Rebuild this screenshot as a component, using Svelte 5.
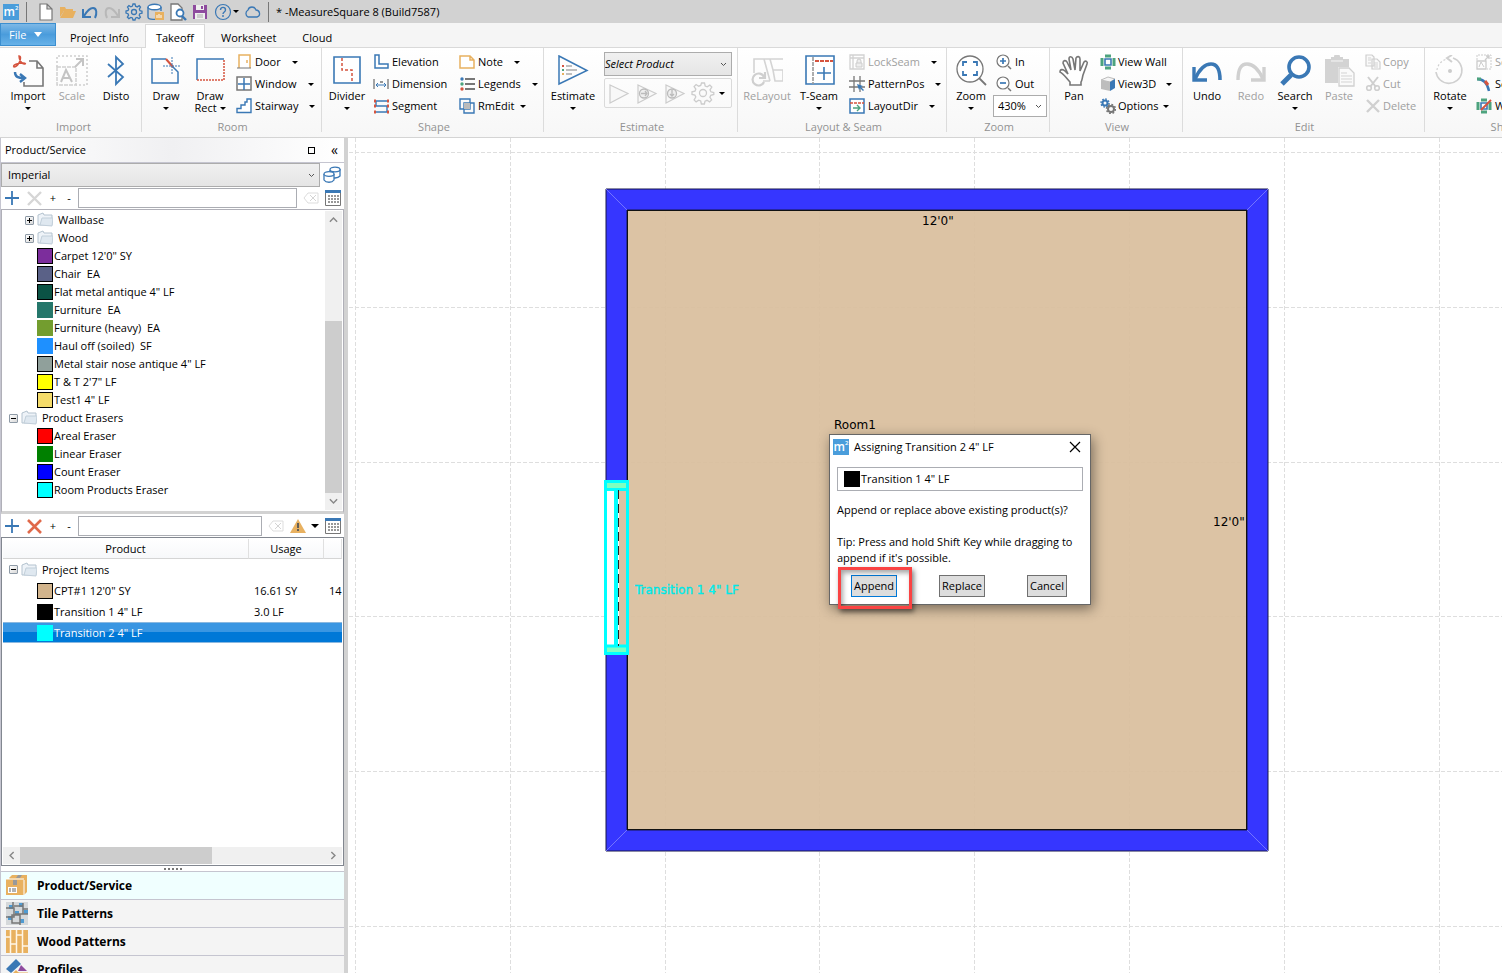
<script>
  const BLUE = '#3a78b5';
  const RED = '#d5543f';
  const GREEN = '#4da37e';
  const GOLD = '#e8b160';

  const icons = {
    import: [32, `<path d="M17 6h8l6 7v18H12v-4M25 6v7h6" fill="none" stroke="#777" stroke-width="1.6"/><path d="M7 1c2 0 2 3 0 7-2 3-4 4-5 4-2-2 4-4 9-4 3 0 3 1 1 1C10 9 7 5 7 1z" fill="none" stroke="${RED}" stroke-width="1.5"/><path d="M3 17c0 5 3 6 9 6M8 19l5 4-5 4" fill="none" stroke="${BLUE}" stroke-width="2.4"/>`],
    scale: [32, `<path d="M1 12V1h30v29H20" fill="none" stroke="#d0d0d0" stroke-width="1.6" stroke-dasharray="2 2"/><path d="M1 12h19v18H1z" fill="none" stroke="#d0d0d0" stroke-width="1.5" stroke-dasharray="4 1"/><path d="M5 27l5-12 6 12M7 23h7" fill="none" stroke="#c4c4c4" stroke-width="2"/><path d="M19 12l8-8M20 4h7v7" fill="none" stroke="#c4c4c4" stroke-width="2"/>`],
    disto: [32, `<path d="M8 9l15 13-7 7V2l7 7L8 22" fill="none" stroke="${BLUE}" stroke-width="1.8"/>`],
    draw: [32, `<path d="M16 4H2v24h26V17l-6-6" fill="none" stroke="${BLUE}" stroke-width="1.5"/><path d="M16 4l7 8" stroke="${RED}" stroke-width="2"/><path d="M22 2v17M13 11h18" stroke="${BLUE}" stroke-dasharray="2 1"/>`],
    rect: [32, `<path d="M3 25V4h27" fill="none" stroke="${BLUE}" stroke-width="1.5"/><path d="M3 25h27V5" fill="none" stroke="${RED}" stroke-width="1.5" stroke-dasharray="2 1"/>`],
    divider: [32, `<path d="M3 2h26v26H3z" fill="#fff" stroke="${BLUE}" stroke-width="1.6"/><path d="M11 3v12h10v13" fill="none" stroke="${RED}" stroke-width="1.5" stroke-dasharray="3 2"/>`],
    estimate: [32, `<path d="M2 1l28 14.500L2 29z" fill="none" stroke="${BLUE}" stroke-width="1.5"/><path d="M9 11h6M9 15h11M9 19h6" stroke="#aaa" stroke-width="1.500"/><path d="M5 11h2" stroke="${RED}" stroke-width="2"/><path d="M5 15h2" stroke="${GREEN}" stroke-width="2"/><path d="M5 19h2" stroke="${GOLD}" stroke-width="2"/>`],
    relayout: [32, `<path d="M3 18V4h29M13 4l6 22M19 4l3 11h10v11M22 15l2 11h8M12 26h7" fill="none" stroke="#d4d4d4" stroke-width="1.6"/><path d="M13 22a6 6 0 1 0 0 5M14 17v6H8" fill="none" stroke="#cfcfcf" stroke-width="2.2"/>`],
    tseam: [32, `<path d="M3 1h28v28H3z" fill="#fff" stroke="${BLUE}" stroke-width="1.6"/><path d="M10 2v27" stroke="#999" stroke-width="1.6" stroke-dasharray="4 1"/><path d="M12 6h18" stroke="${RED}" stroke-width="1.8" stroke-dasharray="4 1"/><path d="M21 12v13M14 18h14" stroke="${BLUE}" stroke-width="1.6"/>`],
    zoom: [32, `<circle cx="15" cy="14" r="13" fill="#fff" stroke="#777" stroke-width="1.3"/><path d="M24 23l7 7" stroke="#777" stroke-width="1.8"/><path d="M8 11V7h4M18 7h4v4M22 16v4h-4M12 20H8v-4" fill="none" stroke="${BLUE}" stroke-width="1.8"/>`],
    pan: [32, `<path d="M12 30v-3C8 23 6 19 2 17c0-3 3-3 5-1l3 3L5 8c0-3 3-3 4-1l4 8-2-11c0-3 3-3 4 0l2 11 1-12c1-2 4-2 4 1v12l4-9c2-2 4 0 3 2l-4 11c-1 4-1 6-2 7v3z" fill="#fff" stroke="#777" stroke-width="1.6"/>`],
    undo: [32, `<path d="M4 24C9 13 14 9 20 9c6 0 9 5 9 16" fill="none" stroke="${BLUE}" stroke-width="3.6"/><path d="M3 12v13h13" fill="none" stroke="${BLUE}" stroke-width="3.4"/>`],
    redo: [32, `<path d="M28 24C23 13 18 9 12 9c-6 0-9 5-9 16" fill="none" stroke="#d0d0d0" stroke-width="3.400"/><path d="M29 12v13H16" fill="none" stroke="#d0d0d0" stroke-width="3.400"/>`],
    search: [32, `<circle cx="20" cy="12" r="10" fill="#fff" stroke="${BLUE}" stroke-width="3.600"/><path d="M12 20l-9 9" stroke="${BLUE}" stroke-width="5"/>`],
    paste: [32, `<path d="M2 4h6V2h3a3 3 0 0 1 6 0h3v2h6v8H15v16H2z" fill="#d3d3d3"/><path d="M8 6h12" stroke="#f6f6f6"/><path d="M16 13h10l5 5v13H16z" fill="#fafafa" stroke="#d0d0d0" stroke-width="1.300"/><path d="M18 18h6M18 21h11M18 24h11M18 27h11" stroke="#d3d3d3"/>`],
    rotate: [32, `<path d="M19 3a13 13 0 1 1-17 14" fill="none" stroke="#d0d0d0" stroke-width="1.600"/><path d="M3 15a13 13 0 0 1 10-11" fill="none" stroke="#d0d0d0" stroke-width="1.200" stroke-dasharray="2 2"/><path d="M18 0l-5 3 5 4" fill="none" stroke="#d0d0d0" stroke-width="2"/><circle cx="16" cy="16" r="2" fill="#ccc"/>`],

    door: [16, `<path d="M3 14V1h11v13" fill="#fff" stroke="${GOLD}" stroke-width="1.5"/><path d="M1 14h14" stroke="#777"/><path d="M11 6v3" stroke="${GOLD}" stroke-width="1.5"/>`],
    window: [16, `<path d="M1 1h14v13H1z" fill="#fff" stroke="#777" stroke-width="1.5"/><path d="M8 2v12M2 8h12" stroke="${BLUE}" stroke-width="1.5"/>`],
    stairway: [16, `<path d="M1 14.500v-4h4V7h4V4h2V1h4v13.500z" fill="#fff" stroke="${BLUE}" stroke-width="1.4"/>`],
    elevation: [16, `<path d="M2 1h4v9h9v4H2z" fill="#fff" stroke="${BLUE}" stroke-width="1.5"/>`],
    dimension: [16, `<path d="M1 3v10M15 3v10" stroke="#888" stroke-width="1.5"/><path d="M3 9h10M5 7L3 9l2 2M11 7l2 2-2 2" fill="none" stroke="${BLUE}"/><path d="M7 6h3" stroke="#777" stroke-width="1.500"/>`],
    segment: [16, `<path d="M2 3h13M2 8h13M2 14h13M3 3v5M14 8v6" stroke="${BLUE}" stroke-width="1.4"/><path d="M1 3h2M14 3h2M1 8h2M14 8h2M1 14h2M14 14h2" stroke="${RED}" stroke-width="3"/>`],
    note: [16, `<path d="M1 2h10l4 4v8H1zM11 2v4h4" fill="#fff" stroke="${GOLD}" stroke-width="1.5"/>`],
    legends: [16, `<path d="M6 3h10M6 8h10M6 13h10" stroke="#777" stroke-width="1.8"/><circle cx="3" cy="3" r="1.700" fill="${BLUE}"/><circle cx="3" cy="8" r="1.700" fill="${GREEN}"/><circle cx="3" cy="13" r="1.700" fill="${RED}"/>`],
    rmedit: [16, `<path d="M1 1h10v10H1zM5 5h10v10H5z" fill="none" stroke="${BLUE}" stroke-width="1.4"/><path d="M5 5h6v6H5z" fill="#bbb"/>`],
    lockseam: [16, `<path d="M1 1h14v14H1zM4 1v14M1 4h14" fill="none" stroke="#d2d2d2" stroke-width="1.3"/><path d="M7 9h6v4H7zM8 9V7a2 2 0 0 1 4 0v2" fill="#eee" stroke="#ccc"/>`],
    patternpos: [16, `<path d="M5 0v16M11 0v16M0 5h16M0 11h16" stroke="#777" stroke-width="1.3"/><path d="M8 8l6 2-2 1 3 3-1 1-3-3-1 2z" fill="${BLUE}"/>`],
    layoutdir: [16, `<path d="M1 1h14v14H1z" fill="#fff" stroke="${BLUE}" stroke-width="1.5"/><path d="M1 5h14" stroke="${RED}" stroke-width="1.5" stroke-dasharray="3 1"/><path d="M4 10h7M8 7l3 3-3 3" fill="none" stroke="${GREEN}" stroke-width="1.4"/>`],
    zoomin: [16, `<circle cx="7" cy="7" r="6" fill="#fff" stroke="#777" stroke-width="1.2"/><path d="M12 12l3 3" stroke="#777" stroke-width="1.5"/><path d="M4 7h6M7 4v6" stroke="${BLUE}" stroke-width="1.7"/>`],
    zoomout: [16, `<circle cx="7" cy="7" r="6" fill="#fff" stroke="#777" stroke-width="1.2"/><path d="M12 12l3 3" stroke="#777" stroke-width="1.5"/><path d="M4 7h6" stroke="${BLUE}" stroke-width="1.7"/>`],
    viewwall: [16, `<path d="M5 5h6v6H5z" fill="#fff" stroke="${BLUE}" stroke-width="1.6"/><path d="M5 2h6M5 14h6M2 4v8M14 4v8" stroke="${GREEN}" stroke-width="3"/>`],
    view3d: [16, `<path d="M1 4l7-3 7 2-5 3z" fill="#f5f5f5" stroke="#bbb"/><path d="M1 4l9 2v9l-9-2z" fill="#bdbdbd"/><path d="M10 6l5-3v9l-5 3z" fill="${BLUE}"/>`],
    options: [16, `<circle cx="5" cy="5" r="2.500" fill="none" stroke="${BLUE}" stroke-width="2"/><circle cx="5" cy="5" r="4" fill="none" stroke="${BLUE}" stroke-width="1.5" stroke-dasharray="1.600 1.500"/><circle cx="11" cy="11" r="3" fill="none" stroke="#777" stroke-width="2"/><circle cx="11" cy="11" r="4.500" fill="none" stroke="#777" stroke-width="1.5" stroke-dasharray="1.800 1.700"/>`],
    copy: [16, `<path d="M1 1h6l2 2v9H1zM7 5h5l3 3v7H7z" fill="#fafafa" stroke="#cfcfcf" stroke-width="1.2"/><path d="M3 4h3M3 6h3M3 9h3M9 9h4M9 11h4M9 13h4" stroke="#d3d3d3"/>`],
    cut: [16, `<path d="M3 1l8 10M13 1L5 11" stroke="#cfcfcf" stroke-width="2"/><circle cx="4" cy="12" r="2.300" fill="none" stroke="#cfcfcf" stroke-width="1.600"/><circle cx="12" cy="12" r="2.300" fill="none" stroke="#cfcfcf" stroke-width="1.600"/>`],
    delete: [16, `<path d="M2 2l12 12M14 2L2 14" stroke="#d0d0d0" stroke-width="2.4"/>`],
    scaleSmall: [16, `<path d="M1 6V1h14v14h-4" fill="none" stroke="#ccc" stroke-dasharray="2 1"/><path d="M1 7h9v8H1zM9 6l4-4M10 2h3v3" fill="none" stroke="#ccc" stroke-width="1.300"/><path d="M3 13l2-5 3 5" fill="none" stroke="#ccc"/>`],
    setCurve: [16, `<path d="M1 3c5 0 10 2 12 12" fill="none" stroke="${BLUE}" stroke-width="2.4"/><path d="M1 3h4" stroke="${GREEN}" stroke-width="3"/><path d="M9 5l3 4" stroke="${RED}" stroke-width="3"/>`],
    wall: [16, `<path d="M5 5h6v6H5z" fill="#fff" stroke="${BLUE}" stroke-width="1.6"/><path d="M5 2h6M5 14h6M2 4v8M14 4v8" stroke="${GREEN}" stroke-width="3"/><path d="M5 12L15 2" stroke="${RED}" stroke-width="2"/>`],

    newFile: [18, `<path d="M3 1h7l5 5v11H3zM10 1v5h5" fill="#fff" stroke="#777" stroke-width="1.200"/>`],
    open: [18, `<path d="M1 14V4h5l1 2h7v2H5z" fill="${GOLD}"/><path d="M5 8h12l-3 7H1z" fill="${GOLD}"/>`],
    undoSmall: [18, `<path d="M3 13c3-5 6-8 9-8 4 0 4 6 2 10" fill="none" stroke="${BLUE}" stroke-width="2"/><path d="M2 6v8h8" fill="none" stroke="${BLUE}" stroke-width="2"/>`],
    redoSmall: [18, `<path d="M15 13C12 8 9 5 6 5c-4 0-4 6-2 10" fill="none" stroke="#b8b8b8" stroke-width="2"/><path d="M16 6v8H8" fill="none" stroke="#b8b8b8" stroke-width="2"/>`],
    gear: [18, `<circle cx="9" cy="9" r="2.500" fill="none" stroke="${BLUE}" stroke-width="1.300"/><path d="M8 1h2l.6 2.200 1.600.7 2-1.200 1.300 1.400-1.200 2 .7 1.600L17 8.200v2l-2.200.5-.6 1.500 1.200 2-1.400 1.400-2-1.200-1.500.7L10 17H8l-.6-2-1.500-.6-2 1.200-1.500-1.400 1.200-2L3 10.700 1 10V8l2.100-.5.6-1.500-1.200-2 1.400-1.400 2 1.200 1.500-.7z" fill="none" stroke="${BLUE}" stroke-width="1.300"/>`],
    database: [18, `<path d="M1 4v10c0 3 9 3 13 1M14 4v4" fill="none" stroke="${BLUE}" stroke-width="1.400"/><ellipse cx="7.500" cy="4" rx="6.500" ry="2.700" fill="#fff" stroke="${BLUE}" stroke-width="1.400"/><path d="M8 9h9v8H8z" fill="${GOLD}"/><path d="M10 12v3M12 11v4M14 12v3" stroke="#fff"/>`],
    preview: [18, `<path d="M2 1h7l4 4v12H2z" fill="#fff" stroke="#777" stroke-width="1.300"/><circle cx="11" cy="10" r="3.500" fill="#fff" stroke="${BLUE}" stroke-width="1.800"/><path d="M13 13l4 4" stroke="${BLUE}" stroke-width="2.400"/>`],
    save: [18, `<path d="M2 2h14v14H2z" fill="#8e4b9e"/><path d="M5 2h8v5H5zM4 10h10v6H4z" fill="#eee"/><path d="M10 3h2v3h-2z" fill="#8e4b9e"/><path d="M6 12h6M6 14h6" stroke="#aaa"/>`],
    cloud: [18, `<path d="M5 14a4 4 0 0 1 0-7c1-4 7-4 8 0 4 0 5 6 1 7z" fill="none" stroke="${BLUE}" stroke-width="1.300"/>`],
    help: [18, `<circle cx="9" cy="9" r="7.500" fill="none" stroke="${BLUE}" stroke-width="1.200"/><path d="M6.500 7c0-3.500 5-3.500 5 0 0 2-2.500 2-2.500 4M9 12v2" fill="none" stroke="${BLUE}" stroke-width="1.400"/>`],

    add: [16, `<path d="M8 1v14M1 8h14" stroke="${BLUE}" stroke-width="1.800"/>`],
    remove: [16, `<path d="M2 2l13 13M15 2L2 15" stroke="#e0694a" stroke-width="2.600"/>`],
    removeOff: [16, `<path d="M2 2l13 13M15 2L2 15" stroke="#d6d6d6" stroke-width="2.400"/>`],
    clear: [16, `<path d="M5 3h10v10H5L1 8z" fill="none" stroke="#ddd"/><path d="M7 5l6 6M13 5l-6 6" stroke="#d4d4d4"/>`],
    grid: [16, `<path d="M.5 1h15v14.500H.5z" fill="#fff" stroke="#777"/><path d="M0 1.500h16" stroke="${BLUE}" stroke-width="3"/><path d="M3 6h11M3 9h11M3 12h11" stroke="#777" stroke-width="1.500" stroke-dasharray="2 1"/>`],
    warning: [16, `<path d="M8 1l8 14H0z" fill="${GOLD}"/><path d="M8 5v5M8 11v2" stroke="#555" stroke-width="1.800"/>`],
    catalogs: [18, `<path d="M7 4v7c2 2 8 1 10-1V3" fill="#fff" stroke="${BLUE}" stroke-width="1.300"/><ellipse cx="12" cy="3.500" rx="5" ry="2.300" fill="#fff" stroke="${BLUE}" stroke-width="1.300"/><path d="M1 8v6c2 3 8 3 10 0V8" fill="#fff" stroke="${BLUE}" stroke-width="1.300"/><ellipse cx="6" cy="8" rx="5" ry="2.300" fill="#fff" stroke="${BLUE}" stroke-width="1.300"/>`],
    folder: [16, `<path d="M1 13V3l5-2 1 2h8v10z" fill="#eef3f8" stroke="#b4c3cf"/><path d="M3 13l2-7h11l-1 8z" fill="#dfe8f0" stroke="#c2cfda"/>`],
    play: [24, `<path d="M3 4l18 8.500L3 22z" fill="#f8f8f8" stroke="#ccc" stroke-width="1.200"/>`],
    playTo: [24, `<path d="M3 4l18 8.500L3 22z" fill="#f8f8f8" stroke="#ccc" stroke-width="1.200"/><circle cx="9" cy="12.500" r="4.500" fill="#eee" stroke="#bbb" stroke-width="1.300"/><path d="M6 12.500h6M10 10l2 2.500-2 2.500" fill="none" stroke="#bbb" stroke-width="1.300"/>`],
    playDown: [24, `<path d="M3 4l18 8.500L3 22z" fill="#f8f8f8" stroke="#ccc" stroke-width="1.200"/><circle cx="9" cy="12.500" r="4.500" fill="#eee" stroke="#bbb" stroke-width="1.300"/><path d="M9 9v6M7 13l2 2 2-2" fill="none" stroke="#bbb" stroke-width="1.300"/>`],
    gearOff: [24, `<circle cx="12" cy="12" r="3.500" fill="none" stroke="#ccc" stroke-width="1.300"/><path d="M10.500 2h3l.7 3 2 .8 2.600-1.700 2 2L19 8.800l.9 2 2.900.7v2l-3 .8-.9 2 1.700 2.600-2 2-2.600-1.600-2 .9-.6 2.800h-3l-.7-3-2-.8-2.600 1.700-2-2L4.800 16l-.9-2-2.900-.6v-2.600l3-.7.8-2-1.700-2.600 2-2L7.700 5.200l2-.8z" fill="none" stroke="#ccc" stroke-width="1.300"/>`],

    box: [24, `<path d="M4 4l3-3h15v17l-3 3" fill="${GOLD}"/><path d="M1 5h18v16H1z" fill="${GOLD}"/><path d="M1 5h18M19 21V6" stroke="#fff"/><path d="M8 6h4v5H8z" fill="#999"/><path d="M13 1h4l-2 3h-4z" fill="#999"/><path d="M3 13h9v6H3z" fill="#fff"/><path d="M5 14v4M8 14v4M10 14v4" stroke="#666"/>`],
    tiles: [24, `<path d="M1 0h22v23H1z" fill="#d5d8da"/><path d="M4 3h4v4H4zM14 1h4v4h-4zM10 9h4v4h-4zM19 8h4v4h-4zM3 14h4v4H3zM15 17h4v4h-4z" fill="#4f9bd2"/><path d="M1 6h8v9H1M9 4h9v8h-8M7 13h8v8H7zM15 12h8M18 1v6h5M8 0v6M15 15v8" fill="none" stroke="#777" stroke-width="1.500"/>`],
    planks: [24, `<path d="M1 0h22v23H1z" fill="${GOLD}"/><path d="M5.500 0v23M11.500 0v23M17.500 0v23M1 7h4M6 14h5M12 5h5M18 16h5" stroke="#fff6e6" stroke-width="1.500"/>`],
    shapes: [24, `<path d="M1 11L11 1l5 5L6 15z" fill="${BLUE}"/><path d="M16 7l6 6h-9z" fill="#8e4b9e"/><path d="M7 16l4-4 4 4z" fill="${GOLD}"/><path d="M13 15h10v5H13z" fill="#fff" stroke="${GOLD}"/>`]
  };

  const groups = [
    { id: 'import', label: 'Import', big: [
      { icon: 'import', label: 'Import', arrow: true },
      { icon: 'scale', label: 'Scale', off: true },
      { icon: 'disto', label: 'Disto' }
    ], cols: [] },
    { id: 'room', label: 'Room', big: [
      { icon: 'draw', label: 'Draw', arrow: true },
      { icon: 'rect', label: 'Draw', second: 'Rect' }
    ], cols: [[
      { icon: 'door', label: 'Door', arrow: 'far' },
      { icon: 'window', label: 'Window', arrow: 'far' },
      { icon: 'stairway', label: 'Stairway', arrow: 'far' }
    ]] },
    { id: 'shape', label: 'Shape', big: [{ icon: 'divider', label: 'Divider', arrow: true }], cols: [[
      { icon: 'elevation', label: 'Elevation' },
      { icon: 'dimension', label: 'Dimension' },
      { icon: 'segment', label: 'Segment' }
    ], [
      { icon: 'note', label: 'Note', arrow: 'far' },
      { icon: 'legends', label: 'Legends', arrow: 'far' },
      { icon: 'rmedit', label: 'RmEdit', arrow: 'near' }
    ]] },
    { id: 'estimate', label: 'Estimate', big: [{ icon: 'estimate', label: 'Estimate', arrow: true, wide: true }], cols: [] },
    { id: 'layout', label: 'Layout & Seam', big: [
      { icon: 'relayout', label: 'ReLayout', off: true, wide: true },
      { icon: 'tseam', label: 'T-Seam', arrow: true, wide: true }
    ], cols: [[
      { icon: 'lockseam', label: 'LockSeam', arrow: 'far', off: true },
      { icon: 'patternpos', label: 'PatternPos', arrow: 'far' },
      { icon: 'layoutdir', label: 'LayoutDir', arrow: 'far' }
    ]] },
    { id: 'zoom', label: 'Zoom', big: [{ icon: 'zoom', label: 'Zoom', arrow: true }], cols: [[
      { icon: 'zoomin', label: 'In' },
      { icon: 'zoomout', label: 'Out' },
      { percent: true }
    ]] },
    { id: 'view', label: 'View', big: [{ icon: 'pan', label: 'Pan' }], cols: [[
      { icon: 'viewwall', label: 'View Wall' },
      { icon: 'view3d', label: 'View3D', arrow: 'far' },
      { icon: 'options', label: 'Options', arrow: 'near' }
    ]] },
    { id: 'edit', label: 'Edit', big: [
      { icon: 'undo', label: 'Undo' },
      { icon: 'redo', label: 'Redo', off: true },
      { icon: 'search', label: 'Search', arrow: true },
      { icon: 'paste', label: 'Paste', off: true }
    ], cols: [[
      { icon: 'copy', label: 'Copy', off: true },
      { icon: 'cut', label: 'Cut', off: true },
      { icon: 'delete', label: 'Delete', off: true }
    ]] },
    { id: 'shape2', label: 'Shape', big: [{ icon: 'rotate', label: 'Rotate', arrow: true }], cols: [[
      { icon: 'scaleSmall', label: 'Scale', off: true },
      { icon: 'setCurve', label: 'Set Arc' },
      { icon: 'wall', label: 'Wall' }
    ]] }
  ];

  const quick = ['newFile', 'open', 'undoSmall', 'redoSmall', 'gear', 'database', 'preview', 'save'];
  const tabs = ['Project Info', 'Takeoff', 'Worksheet', 'Cloud'];
  let activeTab = $state('Takeoff');

  const products = [
    { folder: true, level: 1, sign: '+', name: 'Wallbase' },
    { folder: true, level: 1, sign: '+', name: 'Wood' },
    { color: '#7c2d9c', name: `Carpet 12'0" SY` },
    { color: '#5a6187', name: 'Chair  EA' },
    { color: '#0b5345', name: 'Flat metal antique 4" LF' },
    { color: '#25776b', name: 'Furniture  EA', flat: true },
    { color: '#739d2f', name: 'Furniture (heavy)  EA', flat: true },
    { color: '#1e90ff', name: 'Haul off (soiled)  SF', flat: true },
    { color: '#90a09b', name: 'Metal stair nose antique 4" LF' },
    { color: '#ffff00', name: `T & T 2'7" LF` },
    { color: '#f5dc6b', name: 'Test1 4" LF' },
    { folder: true, level: 0, sign: '-', name: 'Product Erasers' },
    { color: '#ff0000', name: 'Areal Eraser' },
    { color: '#008000', name: 'Linear Eraser', flat: true },
    { color: '#0000ff', name: 'Count Eraser' },
    { color: '#00ffff', name: 'Room Products Eraser' }
  ];

  const items = [
    { color: '#d2b48c', name: `CPT#1 12'0" SY`, usage: '16.61 SY', extra: '14' },
    { color: '#000000', name: 'Transition 1 4" LF', usage: '3.0 LF', extra: '' },
    { color: '#00ffff', name: 'Transition 2 4" LF', usage: '', extra: '', flat: true }
  ];
  let selected = $state(2);

  const sections = [
    { icon: 'box', label: 'Product/Service' },
    { icon: 'tiles', label: 'Tile Patterns' },
    { icon: 'planks', label: 'Wood Patterns' },
    { icon: 'shapes', label: 'Profiles' }
  ];
  let section = $state('Product/Service');

  // one grid cell is three feet at 430%
  const CELL = 154.8;
  const gridX = Array.from({ length: 14 }, (_, i) => 6.5 + Math.round(i * CELL));
  const gridY = Array.from({ length: 10 }, (_, i) => 14.5 + Math.round(i * CELL));
</script>

{#snippet icon(name)}
  {@const [size, body] = icons[name]}
  <svg class="icon" width={size} height={size} viewBox="0 0 {size} {size}" aria-hidden="true">{@html body}</svg>
{/snippet}

{#snippet logo()}
  <span class="logo">m<sup>2</sup></span>
{/snippet}

{#snippet chevron(dir)}
  <svg class="chevron {dir}" width="9" height="9" viewBox="0 0 9 9" aria-hidden="true"><path d="M2 3l2.500 2.500L7 3" /></svg>
{/snippet}

<div class="app">
  <header class="titlebar">
    {@render logo()}
    <span class="bar"></span>
    <div class="quick">
      {#each quick as name}
        <button aria-label={name}>{@render icon(name)}</button>
      {/each}
      <button class="help" aria-label="help">{@render icon('help')}<i class="caret"></i></button>
      <button aria-label="cloud">{@render icon('cloud')}</button>
    </div>
    <span class="bar"></span>
    <span class="title">* -MeasureSquare 8 (Build7587)</span>
  </header>

  <nav class="tabs">
    <button class="file">File <i></i></button>
    {#each tabs as tab}
      <button class="tab" class:active={activeTab === tab} onclick={() => (activeTab = tab)}>{tab}</button>
    {/each}
  </nav>

  <div class="ribbon">
    {#each groups as group}
      <section class="group {group.id}">
        <div class="tools">
          {#each group.big as tool}
            <button class="big" class:wide={tool.wide} class:off={tool.off} disabled={tool.off}>
              {@render icon(tool.icon)}
              <span>{tool.label}</span>
              {#if tool.second}<span class="second">{tool.second} <i class="caret"></i></span>{/if}
              {#if tool.arrow}<i class="caret"></i>{/if}
            </button>
          {/each}
          {#each group.cols as col}
            <div class="col">
              {#each col as tool}
                {#if tool.percent}
                  <div class="select percent">
                    <select aria-label="Zoom level"><option>430%</option></select>
                    {@render chevron('down')}
                  </div>
                {:else}
                  <button class="small" class:off={tool.off}>
                    {@render icon(tool.icon)}<span>{tool.label}</span>
                    {#if tool.arrow}<i class="caret {tool.arrow}"></i>{/if}
                  </button>
                {/if}
              {/each}
            </div>
          {/each}
          {#if group.id === 'estimate'}
            <div class="estimate-box">
              <div class="select product">
                <select aria-label="Product"><option>Select Product</option></select>
                {@render chevron('down')}
              </div>
              <div class="runs">
                {#each ['play', 'playTo', 'playDown', 'gearOff'] as name}
                  <button disabled aria-label={name}>{@render icon(name)}</button>
                {/each}
                <i class="caret"></i>
              </div>
            </div>
          {/if}
        </div>
        <h2>{group.label}</h2>
      </section>
    {/each}
  </div>

  <main>
    <aside>
      <div class="panel-head">
        <span>Product/Service</span>
        <button class="dock" aria-label="Dock"></button>
        <button class="collapse" aria-label="Collapse">«</button>
      </div>
      <div class="units">
        <div class="select imperial">
          <select aria-label="Units"><option>Imperial</option></select>
          {@render chevron('down')}
        </div>
        <button aria-label="Catalogs">{@render icon('catalogs')}</button>
      </div>
      <div class="toolrow">
        <button aria-label="Add">{@render icon('add')}</button>
        <button aria-label="Remove" disabled>{@render icon('removeOff')}</button>
        <button class="sign">+</button>
        <button class="sign">-</button>
        <input type="text" aria-label="Filter products" />
        <button aria-label="Clear">{@render icon('clear')}</button>
        <button aria-label="Columns">{@render icon('grid')}</button>
      </div>

      <div class="tree">
        <ul>
          {#each products as p}
            <li class:folder={p.folder} class:root={p.level === 0}>
              {#if p.folder}
                <button class="expander" aria-label="Toggle {p.name}">{@render sign(p.sign)}</button>{@render icon('folder')}
              {:else}
                <span class="swatch" class:flat={p.flat} style:background-color={p.color}></span>
              {/if}
              <span class="name">{p.name}</span>
            </li>
          {/each}
        </ul>
        <div class="vscroll">
          {@render chevron('up')}
          <div class="thumb"></div>
          {@render chevron('down')}
        </div>
      </div>

      <div class="toolrow lower">
        <button aria-label="Add item">{@render icon('add')}</button>
        <button aria-label="Remove item">{@render icon('remove')}</button>
        <button class="sign">+</button>
        <button class="sign">-</button>
        <input type="text" aria-label="Filter items" />
        <button aria-label="Clear filter">{@render icon('clear')}</button>
        <button class="warn" aria-label="Warnings">{@render icon('warning')}<i class="caret large"></i></button>
        <button aria-label="Item columns">{@render icon('grid')}</button>
      </div>

      <div class="items">
        <div class="table-wrap">
          <table>
            <thead>
              <tr><th class="c-product">Product</th><th class="c-usage">Usage</th><th class="c-extra"></th></tr>
            </thead>
            <tbody>
              <tr class="parent">
                <td colspan="3">
                  <div class="cell"><button class="expander" aria-label="Toggle Project Items">{@render sign('-')}</button>{@render icon('folder')}<span class="name">Project Items</span></div>
                </td>
              </tr>
              {#each items as item, i}
                <tr class:selected={selected === i} onclick={() => (selected = i)}>
                  <td><div class="cell leaf"><span class="swatch" class:flat={item.flat} style:background-color={item.color}></span><span class="name">{item.name}</span></div></td>
                  <td class="num">{item.usage}</td>
                  <td class="num">{item.extra}</td>
                </tr>
              {/each}
            </tbody>
          </table>
        </div>
        <div class="hscroll">
          {@render chevron('left')}
          <div class="track"><div class="thumb"></div></div>
          {@render chevron('right')}
        </div>
      </div>

      <div class="grip"><i></i><i></i><i></i><i></i><i></i></div>
      <nav class="sections">
        {#each sections as s}
          <button class:current={section === s.label} onclick={() => (section = s.label)}>
            {@render icon(s.icon)}<span>{s.label}</span>
          </button>
        {/each}
      </nav>
    </aside>

    <div class="canvas">
      <svg class="plan" width="100%" height="100%">
        <g class="grid">
          {#each gridX as x}<line x1={x} y1="0" x2={x} y2="100%" />{/each}
          {#each gridY as y}<line x1="0" y1={y} x2="100%" y2={y} />{/each}
        </g>
        <path d="M257 51h662v662H257zM278 72v620h620V72z" fill="#3636ff" fill-rule="evenodd" stroke="#16164a" />
        <path d="M257 51l21 21M919 51l-21 21M257 713l21-21M919 713l-21-21" stroke="#7474ff" />
        <rect x="278.500" y="72.500" width="619" height="619" fill="#d9be9d" fill-opacity="0.93" stroke="#111" />
        <rect x="256" y="343" width="23" height="173" fill="#fff" />
        <rect x="270" y="352" width="9" height="156" fill="#dcc3a4" />
        <path d="M257 344h22v7h-22zM257 508h22v7h-22z" fill="#7fffc0" />
        <path d="M256.500 343.500h22v172h-22zM256.500 351.500h22M256.500 508h22" fill="none" stroke="#0ff" stroke-width="3" />
        <path d="M267 352v156" stroke="#0ff" stroke-width="4" />
        <path d="M269.500 352v156" stroke="#222" stroke-dasharray="9 5" />
        <text x="573" y="87">12'0"</text>
        <text x="864" y="388">12'0"</text>
        <text x="485" y="291">Room1</text>
        <text class="transition" x="286" y="456">Transition 1 4" LF</text>
      </svg>

      <div class="dialog" role="dialog" aria-label="Assigning Transition 2">
        <div class="dialog-head">
          {@render logo()}
          <span>Assigning Transition 2 4" LF</span>
          <button aria-label="Close"><svg width="12" height="12" viewBox="0 0 12 12"><path d="M1 1l10 10M11 1L1 11" stroke="#000" stroke-width="1.200" /></svg></button>
        </div>
        <div class="existing"><span class="swatch black"></span><span>Transition 1 4" LF</span></div>
        <p>Append or replace above existing product(s)?</p>
        <p class="tip">Tip: Press and hold Shift Key while dragging to append if it's possible.</p>
        <div class="actions">
          <button class="default">Append</button>
          <button>Replace</button>
          <button>Cancel</button>
        </div>
        <div class="marker"></div>
      </div>
    </div>
  </main>
</div>

{#snippet sign(kind)}
  <svg class="icon" width="7" height="7" viewBox="0 0 7 7" aria-hidden="true"><path d={kind === '+' ? 'M1 3.5h5M3.5 1v5' : 'M1 3.5h5'} stroke="#000" /></svg>
{/snippet}

<style>
  :global(body) {
    margin: 0;
  }

  .app {
    display: flex;
    flex-direction: column;
    height: 100vh;
    overflow: hidden;
    background: #fff;
    color: #000;
    font: 11px/16px "Open Sans", "Noto Sans", sans-serif;
  }

  .app :global(*) {
    box-sizing: border-box;
  }

  button {
    display: flex;
    align-items: center;
    padding: 0;
    border: 0;
    background: none;
    color: inherit;
    font: inherit;
    white-space: nowrap;
  }

  .icon {
    flex: none;
    display: block;
  }

  .caret {
    flex: none;
    border: 3px solid transparent;
    border-top-color: #000;
    border-bottom: 0;
  }

  .caret.large {
    border-width: 4px;
    border-bottom: 0;
  }

  .chevron {
    flex: none;
    fill: none;
    stroke: #555;
  }

  .chevron.up { transform: rotate(180deg); }
  .chevron.left { transform: rotate(90deg); }
  .chevron.right { transform: rotate(-90deg); }

  .vscroll .chevron,
  .hscroll .chevron {
    width: 13px;
    height: 13px;
    stroke: #888;
  }

  .logo {
    flex: none;
    display: flex;
    justify-content: center;
    width: 16px;
    height: 16px;
    background: #4a9ddb;
    color: #fff;
    font-size: 12px;
    font-weight: 600;
    line-height: 16px;
  }

  .logo sup {
    font-size: 6px;
    line-height: 8px;
  }

  .select {
    position: relative;
    display: flex;
    align-items: center;
  }

  .select select {
    appearance: none;
    width: 100%;
    height: 100%;
    padding: 0 18px 0 4px;
    border: 1px solid #acacac;
    border-radius: 0;
    background: linear-gradient(#f0f0f0, #e5e5e5);
    color: #000;
    font: inherit;
  }

  .select .chevron {
    position: absolute;
    right: 4px;
    pointer-events: none;
  }

  .titlebar {
    flex: none;
    display: flex;
    align-items: center;
    height: 23px;
    padding-left: 3px;
    background: #d2d2d2;
  }

  .titlebar .bar {
    width: 1px;
    height: 20px;
    margin: 0 7px;
    background: #777;
  }

  .quick {
    display: flex;
    gap: 4px;
    padding-left: 3px;
  }

  .quick .help {
    gap: 1px;
    margin-left: 1px;
  }

  .tabs {
    flex: none;
    display: flex;
    height: 25px;
    border-bottom: 1px solid #d9d9d9;
    background: #f5f5f5;
  }

  .file {
    gap: 8px;
    width: 56px;
    height: 23px;
    padding-left: 8px;
    border: 1px solid #3c8fd0;
    background: linear-gradient(#7db8e6, #4a9cdc 50%, #68b2e8);
    color: #fff;
  }

  .file i {
    border: 4px solid transparent;
    border-top: 5px solid #fff;
    border-bottom: 0;
  }

  .tab {
    height: 24px;
    margin-top: 1px;
    padding: 2px 12px 0;
    border: 1px solid transparent;
    border-bottom: 0;
  }

  .file + .tab {
    margin-left: 1px;
  }

  .tab.active {
    padding: 2px 10px 0;
    margin: 1px 3px 0;
    border-color: #d9d9d9;
    background: #fff;
  }

  .ribbon {
    flex: none;
    display: flex;
    height: 90px;
    overflow: hidden;
    border-bottom: 1px solid #d4d4d4;
    background: linear-gradient(#fff, #f7f7f7);
  }

  .group {
    flex: none;
    display: flex;
    flex-direction: column;
    padding: 3px 0 0 3px;
    border-right: 1px solid #dcdcdc;
    border-image: linear-gradient(#dcdcdc 83px, transparent 83px) 1;
  }

  .import { width: 142px; padding-left: 6px; }
  .room { width: 180px; padding-left: 2px; }
  .shape { width: 222px; }
  .estimate { width: 194px; }
  .layout { width: 209px; }
  .zoom { width: 103px; padding-left: 2px; }
  .view { width: 133px; padding-left: 2px; }
  .edit { width: 242px; padding-left: 2px; }
  .shape2 { width: 160px; border: 0; }

  .group h2 {
    margin: 0;
    color: #929292;
    font-size: 11px;
    font-weight: 400;
    text-align: center;
  }

  .tools {
    display: flex;
    height: 68px;
  }

  .big {
    flex: none;
    flex-direction: column;
    width: 44px;
    padding-top: 4px;
    line-height: 12px;
  }

  .big.wide {
    width: 52px;
  }

  .big > span {
    padding-top: 3px;
  }

  .big > .second {
    display: flex;
    align-items: center;
    gap: 3px;
    padding-top: 0;
  }

  .big > .caret {
    margin-top: 5px;
  }

  .off {
    color: #a0a0a0;
  }

  .col {
    display: flex;
    flex-direction: column;
    padding-left: 4px;
  }

  .shape .col {
    width: 86px;
  }

  .zoom .col {
    padding-left: 0;
  }

  .zoom .small {
    padding-left: 3px;
  }

  .small {
    gap: 3px;
    height: 22px;
  }

  .view .small,
  .edit .small {
    gap: 2px;
  }

  .caret.far {
    margin-left: 8px;
  }

  .caret.near {
    margin-left: 2px;
  }

  .percent {
    width: 54px;
    height: 22px;
  }

  .percent select {
    background: #fff;
  }

  .estimate-box {
    width: 133px;
    padding: 1px 0 0 5px;
  }

  .product {
    height: 24px;
  }

  .product select {
    padding-left: 0;
    font-style: italic;
  }

  .runs {
    display: flex;
    align-items: center;
    gap: 4px;
    height: 30px;
    margin-top: 2px;
    padding-left: 2px;
    border: 1px solid #dadada;
    border-radius: 2px;
  }

  main {
    flex: 1;
    display: flex;
    min-height: 0;
  }

  aside {
    flex: none;
    display: flex;
    flex-direction: column;
    width: 348px;
    border-left: 1px solid #c5c5d0;
    border-right: 4px solid #d2d2d2;
  }

  .panel-head {
    flex: none;
    display: flex;
    align-items: center;
    gap: 16px;
    height: 25px;
    padding: 0 6px 0 4px;
    border-bottom: 1px solid #c5c5d0;
    background: linear-gradient(90deg, #fff, #f0f0f2 50%, #fff);
  }

  .panel-head span {
    flex: 1;
  }

  .panel-head .dock {
    width: 7px;
    height: 7px;
    border: 1px solid #000;
  }

  .panel-head .collapse {
    font-size: 14px;
  }

  .units {
    flex: none;
    display: flex;
    gap: 3px;
    height: 24px;
  }

  .imperial {
    width: 319px;
  }

  .imperial select {
    padding-left: 6px;
  }

  .toolrow {
    flex: none;
    display: flex;
    align-items: center;
    gap: 6px;
    height: 22px;
    padding: 0 3px;
  }

  .toolrow .sign {
    justify-content: center;
    width: 10px;
  }

  .toolrow input {
    flex: 1;
    min-width: 0;
    height: 20px;
    margin-left: -2px;
    padding: 0 3px;
    border: 1px solid #abadb3;
    font: inherit;
  }

  .toolrow.lower {
    height: 24px;
    border-top: 1px solid #d2d2d2;
  }

  .toolrow .warn {
    gap: 5px;
  }

  .tree {
    flex: none;
    display: flex;
    height: 304px;
    padding: 1px;
    border: 1px solid #b0b0b8;
    border-bottom: 2px solid #d2d2d2;
  }

  .tree ul {
    flex: 1;
    margin: 0;
    padding: 0;
    list-style: none;
  }

  .tree li {
    display: flex;
    align-items: center;
    height: 18px;
    padding-left: 34px;
  }

  .tree .folder {
    gap: 3px;
    padding-left: 22px;
  }

  .tree .root {
    padding-left: 6px;
  }

  .name {
    white-space: pre;
  }

  .folder .name,
  .parent .name {
    padding-left: 2px;
  }

  .expander {
    justify-content: center;
    flex: none;
    width: 9px;
    height: 9px;
    border: 1px solid #8e9aa6;
    border-radius: 1px;
    background: linear-gradient(135deg, #fff, #d8d8d8);
  }

  .swatch {
    flex: none;
    width: 16px;
    height: 16px;
    margin-right: 1px;
    border: 1px solid #000;
  }

  .swatch.flat {
    border-color: transparent;
  }

  .swatch.black {
    background: #000;
  }

  .vscroll {
    display: flex;
    flex-direction: column;
    align-items: center;
    justify-content: space-between;
    width: 17px;
    padding: 2px 0;
    background: #f0f0f0;
  }

  .vscroll .thumb {
    width: 17px;
    height: 172px;
    margin: auto 0 2px;
    background: #cdcdcd;
  }

  .items {
    flex: 1;
    display: flex;
    flex-direction: column;
    min-height: 0;
    padding: 1px;
    border: 1px solid #828790;
    overflow: hidden;
  }

  .table-wrap {
    flex: 1;
    overflow: hidden;
  }

  table {
    width: 100%;
    border-collapse: separate;
    border-spacing: 0;
    table-layout: fixed;
  }

  th {
    height: 20px;
    padding: 0;
    border-right: 1px solid #e0e0e0;
    border-bottom: 1px solid #d5d5d5;
    background: linear-gradient(#fff, #f7f8fa);
    font-weight: 400;
  }

  .c-product { width: 246px; }
  .c-usage { width: 75px; }

  td {
    height: 21px;
    padding: 0;
    white-space: nowrap;
  }

  td.num {
    padding-left: 5px;
  }

  .cell {
    display: flex;
    align-items: center;
    gap: 3px;
    padding-left: 6px;
  }

  .cell.leaf {
    gap: 0;
    padding-left: 34px;
  }

  .selected td {
    border-top: 1px solid #8ab8e0;
    border-bottom: 1px solid #8ab8e0;
    background: linear-gradient(#3a96e2 45%, #0078d7 45%);
    color: #fff;
  }

  .hscroll {
    flex: none;
    display: flex;
    align-items: center;
    gap: 2px;
    height: 17px;
    padding: 0 2px;
    background: #f0f0f0;
  }

  .hscroll .track {
    flex: 1;
    height: 17px;
  }

  .hscroll .thumb {
    width: 63%;
    height: 17px;
    background: #cdcdcd;
  }

  .grip {
    flex: none;
    display: flex;
    justify-content: center;
    align-items: center;
    gap: 2px;
    height: 5px;
  }

  .grip i {
    width: 2px;
    height: 2px;
    background: #777;
  }

  .sections {
    flex: none;
    max-height: 102px;
    overflow: hidden;
    background: #f4f4f4;
  }

  .sections button {
    gap: 8px;
    width: 100%;
    height: 28px;
    padding-left: 4px;
    border-top: 1px solid #c5c5d0;
    font-size: 12px;
    font-weight: 700;
  }

  .sections .current {
    background: #f0ffff;
  }

  .canvas {
    flex: 1;
    position: relative;
    min-width: 0;
    overflow: hidden;
    border-left: 1px solid #fff;
  }

  .plan {
    display: block;
  }

  .plan text {
    font: 12px "DejaVu Sans", sans-serif;
  }

  .plan .transition {
    fill: #0ff;
    stroke: #00d8d8;
    stroke-width: 0.4px;
  }

  .grid {
    stroke: #dedede;
    stroke-dasharray: 4 2;
  }

  .dialog {
    position: absolute;
    left: 480px;
    top: 296px;
    width: 262px;
    padding: 0 7px 7px;
    border: 1px solid #666;
    background: #fff;
    box-shadow: 2px 4px 12px rgba(0, 0, 0, 0.45);
  }

  .dialog-head {
    display: flex;
    align-items: center;
    gap: 5px;
    height: 24px;
    margin: 0 2px 8px -4px;
  }

  .dialog-head span:nth-child(2) {
    flex: 1;
  }

  .existing {
    display: flex;
    align-items: center;
    height: 24px;
    padding-left: 6px;
    border: 1px solid #abadb3;
  }

  .dialog p {
    margin: 11px 0 0;
  }

  .dialog .tip {
    margin-top: 16px;
  }

  .actions {
    display: flex;
    justify-content: space-between;
    margin: 9px 16px 0 14px;
  }

  .actions button {
    height: 22px;
    padding: 0 2px;
    border: 1px solid #707070;
    background: #ddd;
  }

  .actions .default {
    border-color: #0078d7;
  }

  .marker {
    position: absolute;
    left: 8px;
    top: 132px;
    width: 74px;
    height: 42px;
    border: 3px solid #fa4343;
    box-shadow: 2px 3px 5px rgba(0, 0, 0, 0.5), inset 2px 3px 5px rgba(0, 0, 0, 0.35);
    pointer-events: none;
  }
</style>
